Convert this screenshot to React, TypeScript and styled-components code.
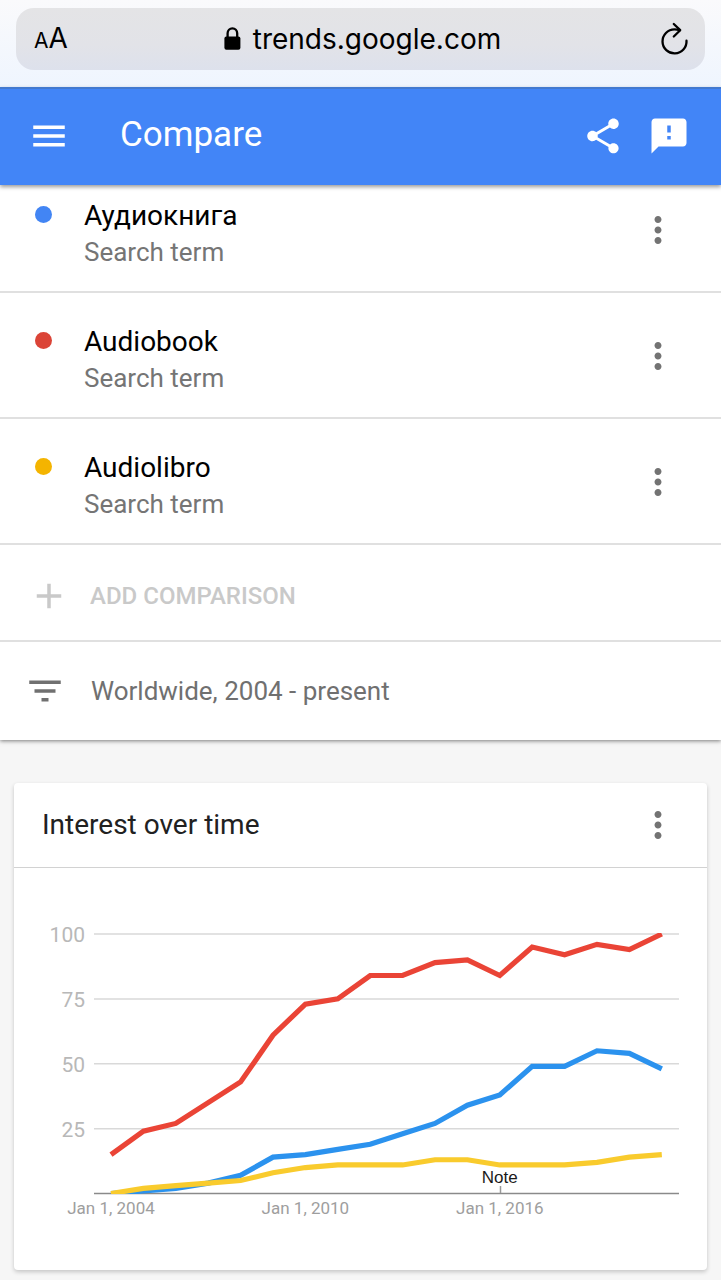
import React from "react";
import styled, { createGlobalStyle } from "styled-components";
import {
  MdAdd,
  MdFeedback,
  MdFilterList,
  MdMenu,
  MdMoreVert,
  MdShare,
} from "react-icons/md";

const GlobalStyle = createGlobalStyle`
  *, *::before, *::after { box-sizing: border-box; }
  body {
    margin: 0;
    background: #f6f6f6;
    color: #000;
    font-family: Roboto, "Liberation Sans", sans-serif;
  }
  button {
    margin: 0;
    padding: 0;
    border: 0;
    background: none;
    color: inherit;
    font: inherit;
    cursor: pointer;
  }
  h1, h2, ul { margin: 0; padding: 0; font-weight: 400; }
  svg { display: block; }
`;

const BrowserBar = styled.div`
  height: 87px;
  padding: 8px 16px 0;
  background: linear-gradient(#fafafc, #eff5fe);
`;

const AddressField = styled.div`
  display: grid;
  grid-template-columns: 64px 1fr 60px;
  align-items: center;
  height: 62px;
  border-radius: 18px;
  background: linear-gradient(#e4e4e6, #e2e3e8 60%, #dde1ec);
  font-family: Inter, "Liberation Sans", sans-serif;
`;

const TextSizeButton = styled.button`
  display: flex;
  align-items: baseline;
  padding-left: 18px;
  font-size: 28px;
  line-height: 34px;
`;

const SmallLetter = styled.span`
  font-size: 21px;
`;

const Address = styled.div`
  display: flex;
  align-items: center;
  justify-content: center;
  gap: 12px;
  font-size: 28px;
  line-height: 36px;
`;

const ReloadButton = styled.button`
  justify-self: end;
  margin-right: 14px;
`;

const AppBar = styled.header`
  position: relative;
  z-index: 1;
  display: flex;
  align-items: center;
  height: 98px;
  padding: 0 31px 2px 28px;
  border-top: 2px solid #4379cf;
  background: #4285f7;
  color: #fff;
  box-shadow: 0 2px 4px rgba(0, 0, 0, 0.4);
`;

const AppTitle = styled.h1`
  flex: 1;
  padding: 0 0 3px 50px;
  font-size: 35px;
  line-height: 42px;
`;

const IconButton = styled.button<{ $gap?: number }>`
  margin-left: ${(p) => p.$gap ?? 0}px;
  font-size: 42px;
`;

const Panel = styled.section`
  margin-top: -18px;
  background: #fff;
  box-shadow: 0 1px 4px rgba(0, 0, 0, 0.5);
`;

const TermList = styled.ul`
  list-style: none;
`;

const TermRow = styled.li`
  display: flex;
  min-height: 126px;
  padding: 30px 42px 0 35px;
  border-bottom: 2px solid #e0e0e0;
`;

const Dot = styled.span<{ $color: string }>`
  width: 17px;
  height: 17px;
  margin: 9px 32px 0 0;
  border-radius: 50%;
  background: ${(p) => p.$color};
`;

const TermText = styled.div`
  flex: 1;
  line-height: 37px;
`;

const TermName = styled.div`
  font-size: 28px;
`;

const TermKind = styled.div`
  color: #757575;
  font-size: 26px;
`;

const MoreButton = styled.button`
  height: 42px;
  color: #737373;
  font-size: 42px;
`;

const TermMore = styled(MoreButton)`
  margin-top: 12px;
`;

const BarButton = styled.button`
  display: flex;
  align-items: center;
  width: 100%;
`;

const AddButton = styled(BarButton)`
  gap: 20px;
  height: 97px;
  padding: 6px 28px 0;
  border-bottom: 2px solid #e0e0e0;
  color: #c9c9c9;
  font-size: 24px;
  font-weight: 500;
`;

const FilterButton = styled(BarButton)`
  gap: 25px;
  height: 98px;
  padding: 0 24px;
  color: #707070;
  font-size: 26px;
`;

const Card = styled.section`
  margin: 43px 14px 10px;
  border-radius: 4px;
  background: #fff;
  box-shadow: 0 2px 4px rgba(0, 0, 0, 0.2);
`;

const CardHeader = styled.div`
  display: flex;
  align-items: center;
  justify-content: space-between;
  height: 85px;
  padding: 0 28px;
  border-bottom: 1px solid #d2d2d2;
`;

const CardTitle = styled.h2`
  color: #212121;
  font-size: 28px;
  line-height: 36px;
`;

const Chart = styled.svg`
  width: 100%;
  height: auto;
`;

const ScaleLabel = styled.text`
  fill: #b8b8b8;
  font-size: 21px;
  text-anchor: end;
`;

const DateLabel = styled.text`
  fill: #9e9e9e;
  font-size: 17px;
  text-anchor: middle;
`;

const NoteLabel = styled.text`
  fill: #1a1a1a;
  font-family: "Liberation Sans", Arial, sans-serif;
  font-size: 17px;
  text-anchor: middle;
`;

const terms = [
  { name: "Аудиокнига", color: "#4285f4" },
  { name: "Audiobook", color: "#db4437" },
  { name: "Audiolibro", color: "#f4b400" },
];

const series = [
  {
    color: "#2b92ee",
    values: [0, 1, 2, 4, 7, 14, 15, 17, 19, 23, 27, 34, 38, 49, 49, 55, 54, 48],
  },
  {
    color: "#ea4436",
    values: [15, 24, 27, 35, 43, 61, 73, 75, 84, 84, 89, 90, 84, 95, 92, 96, 94, 100],
  },
  {
    color: "#f9cb2d",
    values: [0, 2, 3, 4, 5, 8, 10, 11, 11, 11, 13, 13, 11, 11, 11, 12, 14, 15],
  },
];

const axisY = 325.5;
const xAt = (index: number) => 97 + index * 32.4;
const yAt = (value: number) => axisY - value * 2.595;

const dates = [
  { label: "Jan 1, 2004", index: 0 },
  { label: "Jan 1, 2010", index: 6 },
  { label: "Jan 1, 2016", index: 12 },
];

function LockIcon() {
  return (
    <svg width="17" height="24" viewBox="0 0 17 24" aria-hidden="true">
      <rect x="0.4" y="9.6" width="16" height="13.2" rx="2" fill="#000" />
      <path
        d="M3.6 10.5V6.3a4.8 5 0 0 1 9.6 0v4.2"
        fill="none"
        stroke="#000"
        strokeWidth="2.3"
      />
    </svg>
  );
}

function ReloadIcon() {
  return (
    <svg
      width="32"
      height="34"
      viewBox="0 0 32 34"
      fill="none"
      stroke="#000"
      strokeWidth="2.3"
      strokeLinecap="round"
      aria-hidden="true"
    >
      <path d="M27.5 18.7A12 12 0 1 1 15.5 7.4Q18 7.4 20.6 8.2" />
      <path d="M14.8 2L21.2 8.2 14.8 14.5" strokeLinejoin="round" />
    </svg>
  );
}

function InterestChart() {
  return (
    <Chart viewBox="0 0 693 402" role="img" aria-label="Interest over time">
      <defs>
        <clipPath id="plot">
          <rect x="80" y="65" width="586" height="261" />
        </clipPath>
      </defs>
      {[25, 50, 75, 100].map((value) => (
        <g key={value}>
          <line x1="80" x2="665" y1={yAt(value)} y2={yAt(value)} stroke="#d9d9d9" strokeWidth="1.5" />
          <ScaleLabel x="71" y={yAt(value) + 8}>
            {value}
          </ScaleLabel>
        </g>
      ))}
      <line x1="80" x2="665" y1={axisY} y2={axisY} stroke="#8a8a8a" strokeWidth="1.5" />
      <line x1="486.5" x2="486.5" y1="318" y2="325" stroke="#999" strokeWidth="1.5" />
      <g clipPath="url(#plot)" fill="none" strokeWidth="5.2">
        {series.map((line) => (
          <polyline
            key={line.color}
            stroke={line.color}
            points={line.values.map((v, i) => `${xAt(i)},${yAt(v)}`).join(" ")}
          />
        ))}
      </g>
      <NoteLabel x={xAt(12)} y="315">
        Note
      </NoteLabel>
      {dates.map((date) => (
        <DateLabel key={date.label} x={xAt(date.index)} y="346">
          {date.label}
        </DateLabel>
      ))}
    </Chart>
  );
}

export default function App() {
  return (
    <>
      <GlobalStyle />
      <BrowserBar>
        <AddressField>
          <TextSizeButton type="button" aria-label="Text size">
            <SmallLetter>A</SmallLetter>
            <span>A</span>
          </TextSizeButton>
          <Address>
            <LockIcon />
            <span>trends.google.com</span>
          </Address>
          <ReloadButton type="button" aria-label="Reload">
            <ReloadIcon />
          </ReloadButton>
        </AddressField>
      </BrowserBar>
      <AppBar>
        <IconButton type="button" aria-label="Menu">
          <MdMenu />
        </IconButton>
        <AppTitle>Compare</AppTitle>
        <IconButton type="button" aria-label="Share">
          <MdShare />
        </IconButton>
        <IconButton type="button" aria-label="Send feedback" $gap={24}>
          <MdFeedback />
        </IconButton>
      </AppBar>
      <main>
        <Panel>
          <TermList>
            {terms.map((term) => (
              <TermRow key={term.name}>
                <Dot $color={term.color} />
                <TermText>
                  <TermName>{term.name}</TermName>
                  <TermKind>Search term</TermKind>
                </TermText>
                <TermMore type="button" aria-label={`Options for ${term.name}`}>
                  <MdMoreVert />
                </TermMore>
              </TermRow>
            ))}
          </TermList>
          <AddButton type="button">
            <MdAdd size={42} />
            <span>ADD COMPARISON</span>
          </AddButton>
          <FilterButton type="button">
            <MdFilterList size={42} />
            <span>Worldwide, 2004 - present</span>
          </FilterButton>
        </Panel>
        <Card>
          <CardHeader>
            <CardTitle>Interest over time</CardTitle>
            <MoreButton type="button" aria-label="Chart options">
              <MdMoreVert />
            </MoreButton>
          </CardHeader>
          <InterestChart />
        </Card>
      </main>
    </>
  );
}
